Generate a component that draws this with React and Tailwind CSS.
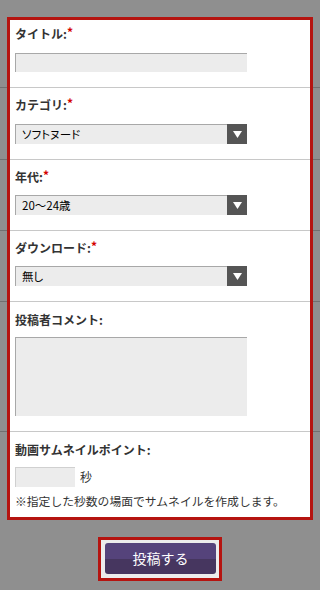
import React from 'react';

const font = { fontFamily: '"Noto Sans CJK JP", "Liberation Sans", sans-serif' };

const Label = ({ children, required, className = '' }) => (
    <div className={`h-5 leading-5 text-[12px] font-bold text-[#333] ${className}`}>
        {children}:
        {required && <span className="text-[#d40000] text-[12px] align-top leading-[15px]">*</span>}
    </div>
);

const Select = ({ value }) => (
    <div className="flex w-[232px] h-5 bg-[#ececec] border-t border-l border-[#a8a8a8]">
        <div className="flex-1 pl-[6px] text-[11.5px] leading-[19px] text-black [font-feature-settings:'palt']">{value}</div>
        <div className="w-5 h-5 -mt-px bg-[#555] flex items-center justify-center">
            <svg width="9" height="7" viewBox="0 0 9 7">
                <path d="M0 0H9L4.5 7Z" fill="#fff" />
            </svg>
        </div>
    </div>
);

const Row = ({ children, className = '' }) => (
    <div className={`px-[15px] pb-[15px] border-b border-[#c8c8c8] ${className}`}>{children}</div>
);

export default function App() {
    return (
        <div className="relative min-h-[590px] bg-white overflow-hidden" style={font}>
            <div className="pt-[17px]">
                <Row className="pt-[7px]">
                    <Label required className="mb-[9px]">タイトル</Label>
                    <div className="w-[232px] h-[19px] bg-[#ececec] border-t border-l border-[#a8a8a8]" />
                </Row>
                <Row className="pt-[7px]">
                    <Label required className="mb-[9px]">カテゴリ</Label>
                    <Select value="ソフトヌード" />
                </Row>
                <Row className="pt-[7px]">
                    <Label required className="mb-2">年代</Label>
                    <Select value="20〜24歳" />
                </Row>
                <Row className="pt-[7px]">
                    <Label required className="mb-2">ダウンロード</Label>
                    <Select value="無し" />
                </Row>
                <Row className="pt-2">
                    <Label className="mb-[7px]">投稿者コメント</Label>
                    <div className="w-[232px] h-[79px] bg-[#ececec] border-t border-l border-[#a8a8a8]" />
                </Row>
                <div className="px-[15px] pt-2">
                    <Label className="mb-[7px]">動画サムネイルポイント</Label>
                    <div className="flex items-center gap-[5px]">
                        <div className="w-[60px] h-5 bg-[#ececec] border-t border-l border-[#d0d0d0]" />
                        <span className="text-[12px] text-[#333]">秒</span>
                    </div>
                    <p className="mt-1 h-5 leading-5 text-[11.8px] text-[#333] whitespace-nowrap">
                        ※指定した秒数の場面でサムネイルを作成します。
                    </p>
                </div>
            </div>

            {/* highlight frame with dimmed surroundings */}
            <div className="absolute left-[7px] top-[17px] w-[306px] h-[503px] border-[3px] border-[#b51410] shadow-[0_0_0_2000px_rgba(0,0,0,0.44)] z-10 pointer-events-none" />

            <div className="relative z-20 mt-[26px] mx-auto w-[124px] h-[44px] border-[3px] border-[#b51410] bg-[#ececec] pl-[4px] pt-[3px]">
                <button className="w-[111px] h-[31px] rounded-[3px] bg-[linear-gradient(#55437b_50%,#46365f_50%)] text-white text-[14px] leading-[31px] text-center">
                    投稿する
                </button>
            </div>
        </div>
    );
}
